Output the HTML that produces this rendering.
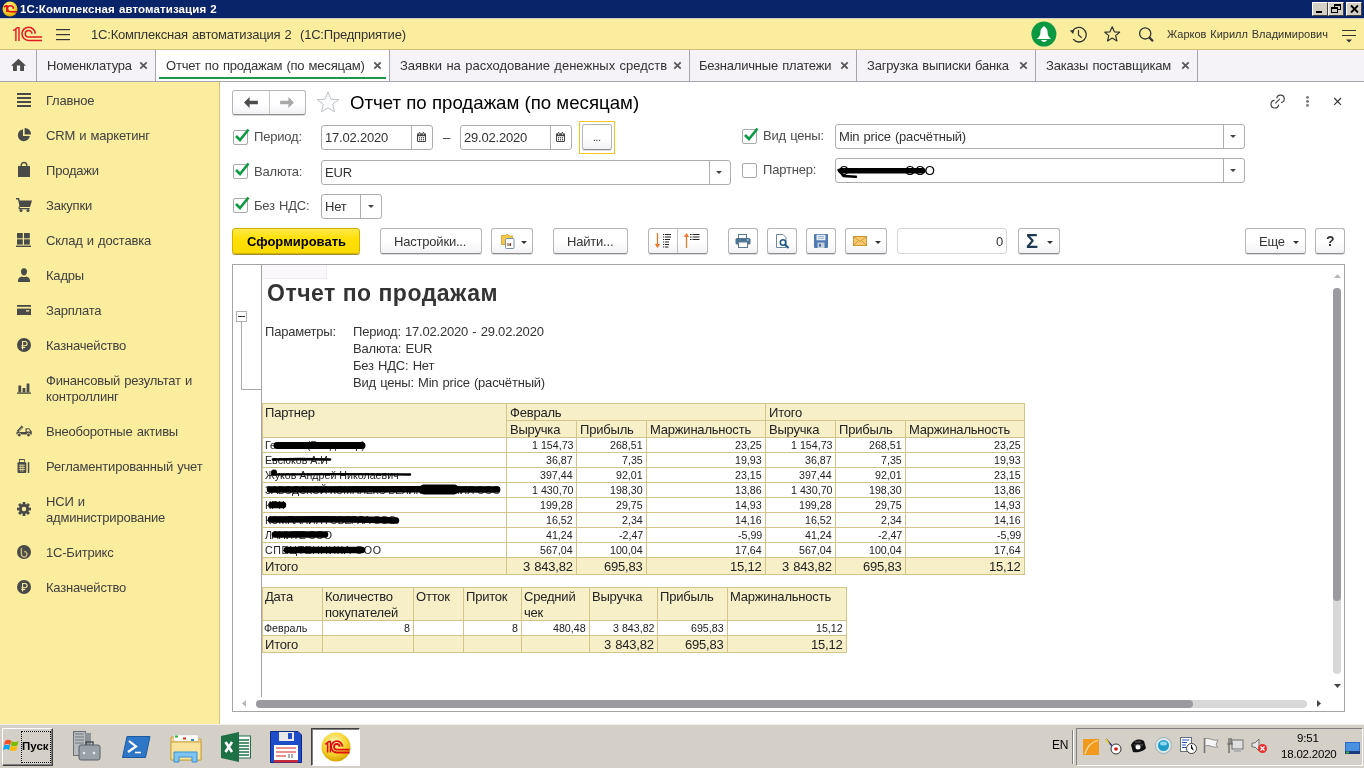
<!DOCTYPE html>
<html><head><meta charset="utf-8">
<style>
*{margin:0;padding:0;box-sizing:border-box}
html,body{width:1364px;height:768px;overflow:hidden;background:#fff;font-family:"Liberation Sans",sans-serif;font-size:13px;color:#333}
.a{position:absolute}
.t,.si,.lbl,.c{will-change:transform}
svg{position:absolute;overflow:visible}
.t{position:absolute;white-space:nowrap;line-height:1;letter-spacing:-0.2px;word-spacing:0.8px}
#title{left:0;top:0;width:1364px;height:18px;background:#0A246A}
#hdr{left:0;top:18px;width:1364px;height:32px;background:#FBED9E;border-top:1px solid #D4D0C8;border-bottom:1px solid #D2C07A}
#tabs{left:0;top:50px;width:1364px;height:32px;background:#F5F3F7;border-bottom:1px solid #A6A5AD}
.tab{position:absolute;top:0;height:31px;border-right:1px solid #A6A5AD}
.tab .t{top:9px;color:#333}
#side{left:0;top:82px;width:220px;height:642px;background:#FBED9E;border-right:1px solid #D6C47E}
.si{position:absolute;left:46px;color:#404040;white-space:nowrap;line-height:16px;letter-spacing:-0.2px;word-spacing:0.8px;margin-top:1px}
.inp{position:absolute;border:1px solid #ADADAD;border-radius:3px;background:#fff}
.inp .t{top:5px;left:3px;color:#333}
.dd{position:absolute;top:0;bottom:0;border-left:1px solid #ADADAD}
.btn{position:absolute;height:26px;border:1px solid #B6B6B6;border-bottom-color:#8E8E8E;border-radius:3px;background:linear-gradient(#fff,#fff 55%,#F2F0F4);box-shadow:0 1px 0 rgba(0,0,0,0.15)}
.btn .t{top:6px;color:#333}
.cb{position:absolute;width:15px;height:15px;border:1px solid #A9A9A9;border-radius:2px;background:#fff}
.lbl{position:absolute;color:#4D4D4D;white-space:nowrap;line-height:1;letter-spacing:-0.2px;word-spacing:0.8px}
.hl{position:absolute;height:1px;background:#D3C48A}
.vl{position:absolute;width:1px;background:#D3C48A}
.hb{position:absolute;background:#F7EFC8}
.c{position:absolute;white-space:nowrap;line-height:1;color:#222;letter-spacing:-0.2px;word-spacing:0.8px}
.c.s{letter-spacing:0;word-spacing:0}
.s{font-size:10.67px}
.rt{text-align:right}
#task{left:0;top:724px;width:1364px;height:44px;background:#D4D0C8;border-top:1px solid #F0EFEA}
</style></head><body>
<!-- title bar -->
<div id="title" class="a">
  <svg style="left:2px;top:1px" width="16" height="16" viewBox="0 0 16 16">
    <defs><radialGradient id="g1c" cx="45%" cy="35%" r="65%"><stop offset="0" stop-color="#FFF8C8"/><stop offset=".6" stop-color="#F8D530"/><stop offset="1" stop-color="#D8A400"/></radialGradient></defs>
    <circle cx="8" cy="8" r="7.5" fill="url(#g1c)"/>
    <path d="M2 6.2 L4 4.8 H5 V11" stroke="#E01010" stroke-width="1.6" fill="none"/>
    <path d="M11.4 7.8 A3 3 0 1 0 8.4 10.8 H15" stroke="#E01010" stroke-width="1.6" fill="none"/>
  </svg>
  <div class="t" style="left:20px;top:4px;font-size:11.5px;font-weight:bold;color:#fff;letter-spacing:0.1px">1С:Комплексная автоматизация 2</div>
  <!-- window buttons -->
  <div class="a" style="left:1312px;top:2px;width:16px;height:14px;background:#D4D0C8;border:1px solid;border-color:#fff #404040 #404040 #fff"><div class="a" style="left:3px;top:8px;width:6px;height:2px;background:#000"></div></div>
  <div class="a" style="left:1328px;top:2px;width:16px;height:14px;background:#D4D0C8;border:1px solid;border-color:#fff #404040 #404040 #fff">
    <div class="a" style="left:5px;top:1px;width:7px;height:6px;border:1px solid #000;border-top-width:2px"></div>
    <div class="a" style="left:2px;top:4px;width:7px;height:6px;border:1px solid #000;border-top-width:2px;background:#D4D0C8"></div></div>
  <div class="a" style="left:1346px;top:2px;width:16px;height:14px;background:#D4D0C8;border:1px solid;border-color:#fff #404040 #404040 #fff">
    <svg style="left:3px;top:2px" width="9" height="8" viewBox="0 0 9 8"><path d="M1 0.5 L8 7.5 M8 0.5 L1 7.5" stroke="#000" stroke-width="1.8"/></svg></div>
</div>

<!-- header -->
<div id="hdr" class="a">
  <svg style="left:0;top:-19px" width="80" height="50" viewBox="0 0 80 50">
    <path d="M13.3 30.8 L17.3 27.6 H19 V41 M15.9 29 V41" stroke="#E21A22" stroke-width="1.4" fill="none"/>
    <path d="M35.2 33.8 A6.6 6.6 0 1 0 28.6 40.4 H42" stroke="#E21A22" stroke-width="1.5" fill="none"/>
    <path d="M31.9 33.8 A3.3 3.3 0 1 0 28.6 37.1 H42" stroke="#E21A22" stroke-width="1.5" fill="none"/>
    <rect x="56" y="29" width="14" height="1.2" fill="#333"/><rect x="56" y="34" width="14" height="1.2" fill="#333"/><rect x="56" y="39" width="14" height="1.2" fill="#333"/>
  </svg>
  <div class="t" style="left:91px;top:9px;color:#333">1С:Комплексная автоматизация 2&nbsp; (1С:Предприятие)</div>
  <svg style="left:0;top:-19px" width="1364" height="50" viewBox="0 0 1364 50">
    <circle cx="1043.9" cy="34.1" r="12.5" fill="#0C9942"/>
    <path d="M1044 26.6 C1043 26.6 1042.4 27.3 1042.2 28 C1041 28.6 1040.5 30 1040.4 32.5 C1040.3 35.2 1039.6 37 1036.8 39 H1051.2 C1048.4 37 1047.7 35.2 1047.6 32.5 C1047.5 30 1047 28.6 1045.8 28 C1045.6 27.3 1045 26.6 1044 26.6 Z" fill="#fff"/>
    <path d="M1041 40.1 H1047 C1046.5 41.3 1045.5 41.9 1044 41.9 C1042.5 41.9 1041.5 41.3 1041 40.1 Z" fill="#fff"/>
    <path d="M1072.4 31.5 A7.3 7.3 0 1 1 1073.2 39.2" stroke="#333" stroke-width="1.3" fill="none"/>
    <path d="M1069.8 30.6 L1074.2 30 L1073.2 34 Z" fill="#333"/>
    <path d="M1078.5 30 V35 L1081.7 37.8" stroke="#333" stroke-width="1.2" fill="none"/>
    <path d="M1112.2 26.8 L1114.4 31.8 L1119.6 32.2 L1115.6 35.6 L1116.9 40.9 L1112.2 38 L1107.5 40.9 L1108.8 35.6 L1104.8 32.2 L1110 31.8 Z" stroke="#333" stroke-width="1.2" fill="none" stroke-linejoin="round"/>
    <circle cx="1145.2" cy="33.4" r="5.6" stroke="#333" stroke-width="1.3" fill="none"/>
    <path d="M1149.2 37.4 L1153 41.2" stroke="#333" stroke-width="2.2"/>
  </svg>
  <div class="t" style="left:1167px;top:10px;font-size:11px;color:#333;letter-spacing:0">Жарков Кирилл Владимирович</div>
  <svg style="left:1342px;top:10px" width="15" height="14" viewBox="0 0 15 14"><path d="M0 1.5h14M0 6.5h14" stroke="#333" stroke-width="1.2"/><path d="M4 10.5 h6 l-3 3z" fill="#333"/></svg>
</div>

<!-- tabs -->
<div id="tabs" class="a">
  <div class="tab" style="left:0;width:37px">
    <svg style="left:11px;top:8px" width="15" height="14" viewBox="0 0 15 14"><path d="M7.5 0.7 L15 7.7 H13 V13 H9.1 V7.4 H5.9 V13 H2 V7.7 H0 Z" fill="#4D4D4D"/></svg>
  </div>
  <div class="tab" style="left:37px;width:119px"><div class="t" style="left:10px">Номенклатура</div>
    <svg style="left:102px;top:11px" width="9" height="9" viewBox="0 0 9 9"><path d="M1.3 1.3L7.7 7.7M7.7 1.3L1.3 7.7" stroke="#555" stroke-width="1.7"/></svg></div>
  <div class="tab" style="left:156px;width:234px;background:#fff"><div class="t" style="left:10px">Отчет по продажам (по месяцам)</div>
    <svg style="left:217px;top:11px" width="9" height="9" viewBox="0 0 9 9"><path d="M1.3 1.3L7.7 7.7M7.7 1.3L1.3 7.7" stroke="#555" stroke-width="1.7"/></svg>
    <div class="a" style="left:3px;top:27px;width:227px;height:2px;background:#1A9A48"></div></div>
  <div class="tab" style="left:390px;width:300px"><div class="t" style="left:10px;letter-spacing:0">Заявки на расходование денежных средств</div>
    <svg style="left:283px;top:11px" width="9" height="9" viewBox="0 0 9 9"><path d="M1.3 1.3L7.7 7.7M7.7 1.3L1.3 7.7" stroke="#555" stroke-width="1.7"/></svg></div>
  <div class="tab" style="left:690px;width:167px"><div class="t" style="left:9px">Безналичные платежи</div>
    <svg style="left:150px;top:11px" width="9" height="9" viewBox="0 0 9 9"><path d="M1.3 1.3L7.7 7.7M7.7 1.3L1.3 7.7" stroke="#555" stroke-width="1.7"/></svg></div>
  <div class="tab" style="left:857px;width:179px"><div class="t" style="left:10px">Загрузка выписки банка</div>
    <svg style="left:162px;top:11px" width="9" height="9" viewBox="0 0 9 9"><path d="M1.3 1.3L7.7 7.7M7.7 1.3L1.3 7.7" stroke="#555" stroke-width="1.7"/></svg></div>
  <div class="tab" style="left:1036px;width:162px"><div class="t" style="left:10px">Заказы поставщикам</div>
    <svg style="left:145px;top:11px" width="9" height="9" viewBox="0 0 9 9"><path d="M1.3 1.3L7.7 7.7M7.7 1.3L1.3 7.7" stroke="#555" stroke-width="1.7"/></svg></div>
</div>
<!-- sidebar -->
<div id="side" class="a">
  <div class="si" style="top:10px">Главное</div>
  <div class="si" style="top:45px">CRM и маркетинг</div>
  <div class="si" style="top:80px">Продажи</div>
  <div class="si" style="top:115px">Закупки</div>
  <div class="si" style="top:150px">Склад и доставка</div>
  <div class="si" style="top:185px">Кадры</div>
  <div class="si" style="top:220px">Зарплата</div>
  <div class="si" style="top:255px">Казначейство</div>
  <div class="si" style="top:290px">Финансовый результат и<br>контроллинг</div>
  <div class="si" style="top:341px">Внеоборотные активы</div>
  <div class="si" style="top:376px">Регламентированный учет</div>
  <div class="si" style="top:411px">НСИ и<br>администрирование</div>
  <div class="si" style="top:462px">1С-Битрикс</div>
  <div class="si" style="top:497px">Казначейство</div>
</div>
<!-- sidebar icons (page coords) -->
<svg style="left:17px;top:93px" width="14" height="14" viewBox="0 0 14 14"><path d="M0 1h14M0 5h14M0 9h14M0 13h14" stroke="#4A4A48" stroke-width="2"/></svg>
<svg style="left:17px;top:128px" width="14" height="14" viewBox="0 0 14 14"><path d="M6 1.2 A6 6 0 1 0 12.8 8 H6 Z" fill="#4A4A48"/><path d="M7.6 0 A6.2 6.2 0 0 1 14 6.4 H7.6 Z" fill="#4A4A48"/></svg>
<svg style="left:18px;top:162px" width="12" height="15" viewBox="0 0 12 15"><rect x="0" y="4" width="12" height="11" fill="#4A4A48"/><path d="M3.2 6 V3.3 A2.8 2.8 0 0 1 8.8 3.3 V6" stroke="#4A4A48" stroke-width="1.4" fill="none"/></svg>
<svg style="left:16px;top:198px" width="16" height="14" viewBox="0 0 16 14"><path d="M0 0.8 H2.6 L3 3" stroke="#4A4A48" stroke-width="1.4" fill="none"/><path d="M2.4 2.4 H16 L14 9 H3.5 Z" fill="#4A4A48"/><path d="M3.2 8.5 V10.6 H13.6" stroke="#4A4A48" stroke-width="1.2" fill="none"/><circle cx="5" cy="12.4" r="1.5" fill="#4A4A48"/><circle cx="12" cy="12.4" r="1.5" fill="#4A4A48"/></svg>
<svg style="left:16px;top:233px" width="15" height="14" viewBox="0 0 15 14"><rect x="1" y="0" width="5.8" height="5.3" fill="#4A4A48"/><rect x="8" y="0" width="5.8" height="5.3" fill="#4A4A48"/><rect x="1" y="6.3" width="5.8" height="5.3" fill="#4A4A48"/><rect x="8" y="6.3" width="5.8" height="5.3" fill="#4A4A48"/><rect x="0" y="12.6" width="15" height="1.4" fill="#4A4A48"/></svg>
<svg style="left:18px;top:268px" width="12" height="14" viewBox="0 0 12 14"><path d="M6 0.3 C8.4 0.3 9 2 9 3.8 C9 6.2 7.6 7.6 6 7.6 C4.4 7.6 3 6.2 3 3.8 C3 2 3.6 0.3 6 0.3Z" fill="#4A4A48"/><path d="M0 12.6 C0 10 2 8.8 3.8 8.4 C4.6 9.2 7.4 9.2 8.2 8.4 C10 8.8 12 10 12 12.6 V14 H0Z" fill="#4A4A48"/></svg>
<svg style="left:17px;top:305px" width="14" height="10" viewBox="0 0 14 10"><rect x="0" y="0" width="14" height="1.8" fill="#4A4A48"/><rect x="0" y="3.6" width="14" height="6.4" fill="#4A4A48"/><rect x="9" y="5.2" width="3.2" height="1.3" fill="#FBED9E"/></svg>
<svg style="left:17px;top:338px" width="14" height="14" viewBox="0 0 14 14"><circle cx="7" cy="7" r="7" fill="#4A4A48"/><path d="M5.6 11.5 V3.5 H8 A2.1 2.1 0 0 1 8 7.7 H4.4 M4.4 9.5 H8.2" stroke="#FBED9E" stroke-width="1.1" fill="none"/></svg>
<svg style="left:17px;top:382px" width="14" height="12" viewBox="0 0 14 12"><rect x="1.4" y="3.5" width="2.8" height="7" fill="#4A4A48"/><rect x="5.6" y="6" width="2.8" height="4.5" fill="#4A4A48"/><rect x="9.6" y="1.5" width="2.8" height="9" fill="#4A4A48"/><rect x="0" y="10.5" width="14" height="1.3" fill="#4A4A48"/></svg>
<svg style="left:16px;top:424px" width="16" height="13" viewBox="0 0 16 13"><path d="M0.5 7.2 L5.5 1.5 L7.5 3.2 L3 8" fill="#4A4A48"/><path d="M1.5 5.5 L4.5 2.2 M3 7 L6.3 3.2" stroke="#FBED9E" stroke-width="0.7"/><path d="M0.5 8 H9.5 V4.2 H13.2 L15.8 7.5 V10.5 H0.5 Z" fill="#4A4A48"/><path d="M10.7 5.2 H12.8 L14.4 7.4 H10.7Z" fill="#FBED9E"/><circle cx="3.3" cy="11" r="1.8" fill="#4A4A48" stroke="#FBED9E" stroke-width="0.7"/><circle cx="12.5" cy="11" r="1.8" fill="#4A4A48" stroke="#FBED9E" stroke-width="0.7"/></svg>
<svg style="left:17px;top:459px" width="13" height="14" viewBox="0 0 13 14"><rect x="0.5" y="3.2" width="8.8" height="10.8" rx="1" fill="#4A4A48"/><rect x="2" y="0" width="5.8" height="3.8" fill="#4A4A48"/><rect x="2.8" y="1" width="4.2" height="2" fill="#FBED9E"/><path d="M1.8 6.2h6.2M1.8 8.4h6.2M1.8 10.6h6.2M3.8 5.5v7.2M5.9 5.5v7.2" stroke="#FBED9E" stroke-width="0.7"/><rect x="10.8" y="3.2" width="1.5" height="10.8" fill="#4A4A48"/></svg>
<svg style="left:17px;top:502px" width="14" height="14" viewBox="0 0 14 14"><g fill="#4A4A48"><circle cx="7" cy="7" r="5"/><rect x="5.6" y="0" width="2.8" height="14"/><rect x="0" y="5.6" width="14" height="2.8"/><rect x="5.6" y="0" width="2.8" height="14" transform="rotate(45 7 7)"/><rect x="5.6" y="0" width="2.8" height="14" transform="rotate(-45 7 7)"/></g><circle cx="7" cy="7" r="2.2" fill="#FBED9E"/></svg>
<svg style="left:17px;top:545px" width="14" height="14" viewBox="0 0 14 14"><circle cx="7" cy="7" r="7" fill="#4A4A48"/><path d="M4.4 3 V9 A2.8 2.8 0 1 0 7.2 6.4" stroke="#C9B978" stroke-width="1.5" fill="none"/></svg>
<svg style="left:17px;top:580px" width="14" height="14" viewBox="0 0 14 14"><circle cx="7" cy="7" r="7" fill="#4A4A48"/><path d="M5.6 11.5 V3.5 H8 A2.1 2.1 0 0 1 8 7.7 H4.4 M4.4 9.5 H8.2" stroke="#FBED9E" stroke-width="1.1" fill="none"/></svg>
<!-- form header -->
<div class="btn" style="left:232px;top:90px;width:74px;height:25px"><div class="a" style="left:36px;top:0;width:1px;height:23px;background:#C8C8C8"></div></div>
<svg style="left:244px;top:97px" width="14" height="11" viewBox="0 0 14 11"><path d="M0 5.5 L5.6 0 V3.8 H13.9 V7.2 H5.6 V11Z" fill="#4D4D4D"/></svg>
<svg style="left:280px;top:97px" width="14" height="11" viewBox="0 0 14 11"><path d="M14 5.5 L8.4 0 V3.8 H0.1 V7.2 H8.4 V11Z" fill="#A8A8A8"/></svg>
<svg style="left:316px;top:91px" width="24" height="22" viewBox="0 0 24 22"><path d="M12 1 L14.9 8.2 L22.6 8.6 L16.6 13.4 L18.6 20.9 L12 16.7 L5.4 20.9 L7.4 13.4 L1.4 8.6 L9.1 8.2 Z" stroke="#B8C2CC" stroke-width="1" fill="none" stroke-linejoin="round"/></svg>
<div class="t" style="left:350px;top:94px;font-size:18.67px;color:#000;letter-spacing:0;word-spacing:0">Отчет по продажам (по месяцам)</div>
<svg style="left:0;top:0" width="1364" height="120" viewBox="0 0 1364 120">
  <path d="M1274.6 100.4 A3.8 3.8 0 1 0 1278.6 104.6 M1276.7 98.4 A3.8 3.8 0 1 1 1281 102.6 M1275.3 103.4 L1279.8 98.9" stroke="#444" stroke-width="1.2" fill="none"/>
  <circle cx="1307.5" cy="97.4" r="1.4" fill="#777"/><circle cx="1307.5" cy="101.5" r="1.4" fill="#777"/><circle cx="1307.5" cy="105.4" r="1.4" fill="#777"/>
  <path d="M1334.2 98 L1341 104.9 M1341 98 L1334.2 104.9" stroke="#333" stroke-width="1.1"/>
</svg>

<!-- row 1 -->
<div class="cb" style="left:233px;top:130px"></div>
<svg style="left:235px;top:128px" width="15" height="14" viewBox="0 0 15 14"><path d="M1 8 L5 12 L13.5 1.5" stroke="#0E9A44" stroke-width="2.6" fill="none"/></svg>
<div class="lbl" style="left:254px;top:130px">Период:</div>
<div class="inp" style="left:321px;top:125px;width:112px;height:25px"><div class="t">17.02.2020</div><div class="dd" style="left:89px;width:22px"></div>
  <svg style="left:95px;top:6px" width="10" height="11" viewBox="0 0 10 11"><rect x="0" y="1.2" width="9" height="8.8" rx="1.2" fill="#444"/><rect x="1" y="4.2" width="7" height="4.8" fill="#fff"/><rect x="2" y="1.3" width="1.3" height="1.3" fill="#fff"/><rect x="5.8" y="1.3" width="1.3" height="1.3" fill="#fff"/><circle cx="2.6" cy="0.7" r="0.75" fill="#444"/><circle cx="6.4" cy="0.7" r="0.75" fill="#444"/><g fill="#444"><circle cx="2.5" cy="5.7" r="0.7"/><circle cx="4.5" cy="5.7" r="0.7"/><circle cx="6.5" cy="5.7" r="0.7"/><circle cx="2.5" cy="7.7" r="0.7"/><circle cx="4.5" cy="7.7" r="0.7"/><circle cx="6.5" cy="7.7" r="0.7"/></g></svg></div>
<div class="t" style="left:443px;top:131px;color:#333">–</div>
<div class="inp" style="left:460px;top:125px;width:112px;height:25px"><div class="t">29.02.2020</div><div class="dd" style="left:89px;width:22px"></div>
  <svg style="left:95px;top:6px" width="10" height="11" viewBox="0 0 10 11"><rect x="0" y="1.2" width="9" height="8.8" rx="1.2" fill="#444"/><rect x="1" y="4.2" width="7" height="4.8" fill="#fff"/><rect x="2" y="1.3" width="1.3" height="1.3" fill="#fff"/><rect x="5.8" y="1.3" width="1.3" height="1.3" fill="#fff"/><circle cx="2.6" cy="0.7" r="0.75" fill="#444"/><circle cx="6.4" cy="0.7" r="0.75" fill="#444"/><g fill="#444"><circle cx="2.5" cy="5.7" r="0.7"/><circle cx="4.5" cy="5.7" r="0.7"/><circle cx="6.5" cy="5.7" r="0.7"/><circle cx="2.5" cy="7.7" r="0.7"/><circle cx="4.5" cy="7.7" r="0.7"/><circle cx="6.5" cy="7.7" r="0.7"/></g></svg></div>
<div class="a" style="left:579px;top:121px;width:36px;height:33px;border:1px solid #F2C71E"></div>
<div class="btn" style="left:582px;top:124px;width:30px;height:26px"><div class="t" style="left:10px;top:8px;font-size:10px">...</div></div>

<div class="cb" style="left:742px;top:129px"></div>
<svg style="left:744px;top:127px" width="15" height="14" viewBox="0 0 15 14"><path d="M1 8 L5 12 L13.5 1.5" stroke="#0E9A44" stroke-width="2.6" fill="none"/></svg>
<div class="lbl" style="left:763px;top:129px">Вид цены:</div>
<div class="inp" style="left:835px;top:124px;width:410px;height:25px"><div class="t">Min price (расчётный)</div><div class="dd" style="left:387px;width:22px"></div>
  <svg style="left:394px;top:10px" width="6" height="3" viewBox="0 0 6 3"><path d="M0 0h6L3 3z" fill="#444"/></svg></div>

<!-- row 2 -->
<div class="cb" style="left:233px;top:164px"></div>
<svg style="left:235px;top:162px" width="15" height="14" viewBox="0 0 15 14"><path d="M1 8 L5 12 L13.5 1.5" stroke="#0E9A44" stroke-width="2.6" fill="none"/></svg>
<div class="lbl" style="left:254px;top:165px">Валюта:</div>
<div class="inp" style="left:321px;top:160px;width:410px;height:25px"><div class="t">EUR</div><div class="dd" style="left:387px;width:22px"></div>
  <svg style="left:394px;top:10px" width="6" height="3" viewBox="0 0 6 3"><path d="M0 0h6L3 3z" fill="#444"/></svg></div>

<div class="cb" style="left:742px;top:163px"></div>
<div class="lbl" style="left:763px;top:163px">Партнер:</div>
<div class="inp" style="left:835px;top:158px;width:410px;height:25px"><div class="dd" style="left:387px;width:22px"></div>
  <svg style="left:394px;top:10px" width="6" height="3" viewBox="0 0 6 3"><path d="M0 0h6L3 3z" fill="#444"/></svg></div>
<div class="t" style="left:839px;top:164px;color:#000">С</div>
<div class="t" style="left:905px;top:164px;color:#000">ООО</div>
<svg style="left:832px;top:156px" width="110" height="30" viewBox="0 0 110 30"><g stroke="#000" fill="none" stroke-linecap="round"><path d="M9 14.8 H91" stroke-width="5.5"/><path d="M6.5 14 L11.5 20 L24 20.8" stroke-width="2.4"/></g></svg>
<!-- row 3 -->
<div class="cb" style="left:233px;top:198px"></div>
<svg style="left:235px;top:196px" width="15" height="14" viewBox="0 0 15 14"><path d="M1 8 L5 12 L13.5 1.5" stroke="#0E9A44" stroke-width="2.6" fill="none"/></svg>
<div class="lbl" style="left:254px;top:199px">Без НДС:</div>
<div class="inp" style="left:321px;top:194px;width:61px;height:25px"><div class="t">Нет</div><div class="dd" style="left:38px;width:22px"></div>
  <svg style="left:46px;top:10px" width="6" height="3" viewBox="0 0 6 3"><path d="M0 0h6L3 3z" fill="#444"/></svg></div>
<div class="a" style="left:710px;top:161px;width:1px;height:23px"></div>

<!-- toolbar -->
<div class="btn" style="left:232px;top:228px;width:128px;background:linear-gradient(#FFE84A,#FFE000 45%,#F9D900);border-color:#D0B000;box-shadow:0 1px 0 #A89030"><div class="t" style="left:14px;font-weight:bold;color:#000;letter-spacing:0">Сформировать</div></div>
<div class="btn" style="left:380px;top:228px;width:102px"><div class="t" style="left:13px">Настройки...</div></div>
<div class="btn" style="left:491px;top:228px;width:42px"></div>
<svg style="left:501px;top:233px" width="14" height="16" viewBox="0 0 14 16"><path d="M0.5 2.5 H4.5 L5.5 1.5 H7 L8 3 H11.5 V11.5 H0.5Z" fill="#F4C94A" stroke="#D49A20" stroke-width="0.8"/><rect x="4.5" y="5.5" width="8.5" height="10" rx="1" fill="#fff" stroke="#7890A0" stroke-width="1"/><path d="M7 13V10M9.5 13V10" stroke="#E02020" stroke-width="1"/><path d="M8.3 13V10.5" stroke="#20B040" stroke-width="1"/></svg>
<svg style="left:521px;top:241px" width="6" height="3" viewBox="0 0 6 3"><path d="M0 0h6L3 3z" fill="#333"/></svg>
<div class="btn" style="left:553px;top:228px;width:75px"><div class="t" style="left:13px">Найти...</div></div>
<div class="btn" style="left:648px;top:228px;width:60px"><div class="a" style="left:28px;top:0;width:1px;height:24px;background:#C0C0C0"></div></div>
<svg style="left:654px;top:233px" width="18" height="16" viewBox="0 0 18 16"><path d="M3.5 0 V14" stroke="#F07828" stroke-width="1.3"/><path d="M0.8 11 L3.5 15 L6.2 11Z" fill="#F07828"/><path d="M9 1.5h1.2M11 1.5h6M9 4h1.2M11 4h6M9 6.5h1.2M11 6.5h5M9 9h1.2M11 9h4M9 11.5h1.2M11 11.5h4M9 14h1.2M11 14h3.5" stroke="#222" stroke-width="1"/></svg>
<svg style="left:683px;top:233px" width="18" height="16" viewBox="0 0 18 16"><path d="M3.5 1.5 V15" stroke="#F07828" stroke-width="1.3"/><path d="M0.8 4 L3.5 0 L6.2 4Z" fill="#F07828"/><path d="M7 1.5h1.5M9.5 1.5h7M7 4h1.5M9.5 4h7M7 6.5h1.5M9.5 6.5h7" stroke="#222" stroke-width="1.1"/></svg>
<div class="btn" style="left:728px;top:228px;width:30px"></div>
<svg style="left:735px;top:234px" width="16" height="14" viewBox="0 0 16 14"><rect x="3.5" y="0.5" width="8" height="4" fill="#fff" stroke="#5A7890"/><rect x="0.5" y="4" width="15" height="6.5" rx="1.5" fill="#4E7494"/><rect x="3.5" y="8" width="9" height="5.5" fill="#fff" stroke="#5A7890"/><rect x="12" y="5.5" width="1.5" height="1" fill="#fff"/></svg>
<div class="btn" style="left:767px;top:228px;width:30px"></div>
<svg style="left:776px;top:234px" width="14" height="15" viewBox="0 0 14 15"><path d="M0.5 0.5 H7 L10 3.5 V13.5 H0.5Z" fill="#fff" stroke="#6E8AA0"/><circle cx="7" cy="8.5" r="2.7" fill="#fff" stroke="#1E5A8E" stroke-width="1.6"/><path d="M9 10.5 L12.5 14" stroke="#1E5A8E" stroke-width="2"/></svg>
<div class="btn" style="left:806px;top:228px;width:30px"></div>
<svg style="left:814px;top:234px" width="14" height="14" viewBox="0 0 14 14"><rect x="0" y="0" width="14" height="14" rx="1" fill="#4D7AB0"/><rect x="2.5" y="0.8" width="9" height="5.5" fill="#E8EEF4"/><path d="M4 2.5h6M4 4.3h6" stroke="#8AA4C0" stroke-width="0.8"/><rect x="3.5" y="8.5" width="7" height="5.5" fill="#C8D0D8"/><rect x="5" y="9.8" width="2" height="3" fill="#4D7AB0"/></svg>
<div class="btn" style="left:845px;top:228px;width:42px"></div>
<svg style="left:853px;top:236px" width="14" height="10" viewBox="0 0 14 10"><rect x="0.5" y="0.5" width="13" height="9" fill="#F7C870" stroke="#C8962E"/><path d="M0.5 0.5 L7 5.5 L13.5 0.5 M0.5 9.5 L5 5 M13.5 9.5 L9 5" stroke="#C8962E" stroke-width="0.9" fill="none"/></svg>
<svg style="left:875px;top:241px" width="6" height="3" viewBox="0 0 6 3"><path d="M0 0h6L3 3z" fill="#333"/></svg>
<div class="inp" style="left:897px;top:228px;width:110px;height:26px;border-color:#D6D6D6"><div class="t" style="left:auto;right:3px;top:6px">0</div></div>
<div class="btn" style="left:1018px;top:228px;width:42px"></div>
<div class="t" style="left:1026px;top:231px;font-size:20px;font-weight:bold;color:#1E3A52;letter-spacing:0">Σ</div>
<svg style="left:1047px;top:241px" width="6" height="3" viewBox="0 0 6 3"><path d="M0 0h6L3 3z" fill="#333"/></svg>
<div class="btn" style="left:1245px;top:228px;width:61px"><div class="t" style="left:13px">Еще</div>
  <svg style="left:47px;top:12px" width="6" height="3" viewBox="0 0 6 3"><path d="M0 0h6L3 3z" fill="#333"/></svg></div>
<div class="btn" style="left:1315px;top:228px;width:30px"><div class="t" style="left:10px;font-weight:bold;font-size:14px;top:5px">?</div></div>
<!-- report area -->
<div class="a" style="left:232px;top:264px;width:1113px;height:448px;border:1px solid #A4A4A4"></div>
<div class="a" style="left:261px;top:265px;width:1px;height:432px;background:#A4A4A4"></div>
<div class="a" style="left:262px;top:265px;width:65px;height:14px;background:#FBF8FC;border-right:1px solid #F0ECF2;border-bottom:1px solid #F0ECF2"></div>
<div class="a" style="left:236px;top:311px;width:11px;height:11px;border:1px solid #B0B0B0;background:#fff"><div class="a" style="left:1px;top:4px;width:7px;height:1px;background:#333"></div></div>
<div class="a" style="left:241px;top:322px;width:1px;height:68px;background:#A8A8A8"></div>
<div class="a" style="left:241px;top:389px;width:20px;height:1px;background:#A8A8A8"></div>
<div class="t" style="left:267px;top:282px;font-size:23px;font-weight:bold;letter-spacing:0.5px;word-spacing:0;color:#333">Отчет по продажам</div>
<div class="t" style="left:265px;top:325px;color:#333">Параметры:</div>
<div class="t" style="left:353px;top:323px;line-height:17px;color:#333">Период: 17.02.2020 - 29.02.2020<br>Валюта: EUR<br>Без НДС: Нет<br>Вид цены: Min price (расчётный)</div>
<div class="hb" style="left:262px;top:403px;width:762px;height:34px"></div>
<div class="hb" style="left:262px;top:557px;width:762px;height:17px"></div>
<div class="hl" style="left:262px;top:403px;width:763px"></div>
<div class="hl" style="left:262px;top:437px;width:763px"></div>
<div class="hl" style="left:262px;top:452px;width:763px"></div>
<div class="hl" style="left:262px;top:467px;width:763px"></div>
<div class="hl" style="left:262px;top:482px;width:763px"></div>
<div class="hl" style="left:262px;top:497px;width:763px"></div>
<div class="hl" style="left:262px;top:512px;width:763px"></div>
<div class="hl" style="left:262px;top:527px;width:763px"></div>
<div class="hl" style="left:262px;top:542px;width:763px"></div>
<div class="hl" style="left:262px;top:557px;width:763px"></div>
<div class="hl" style="left:262px;top:574px;width:763px"></div>
<div class="hl" style="left:506px;top:420px;width:519px"></div>
<div class="vl" style="left:262px;top:403px;height:172px"></div>
<div class="vl" style="left:1024px;top:403px;height:172px"></div>
<div class="vl" style="left:506px;top:403px;height:172px"></div>
<div class="vl" style="left:765px;top:403px;height:172px"></div>
<div class="vl" style="left:576px;top:420px;height:155px"></div>
<div class="vl" style="left:646px;top:420px;height:155px"></div>
<div class="vl" style="left:835px;top:420px;height:155px"></div>
<div class="vl" style="left:905px;top:420px;height:155px"></div>
<div class="c " style="left:265px;top:406px;">Партнер</div>
<div class="c " style="left:510px;top:406px;">Февраль</div>
<div class="c " style="left:769px;top:406px;">Итого</div>
<div class="c " style="left:510px;top:423px;">Выручка</div>
<div class="c " style="left:580px;top:423px;">Прибыль</div>
<div class="c " style="left:650px;top:423px;">Маржинальность</div>
<div class="c " style="left:769px;top:423px;">Выручка</div>
<div class="c " style="left:839px;top:423px;">Прибыль</div>
<div class="c " style="left:909px;top:423px;">Маржинальность</div>
<div class="c s" style="left:265px;top:440px;">Ге</div>
<div class="c s" style="right:791px;top:440px;">1 154,73</div>
<div class="c s" style="right:721px;top:440px;">268,51</div>
<div class="c s" style="right:602px;top:440px;">23,25</div>
<div class="c s" style="right:532px;top:440px;">1 154,73</div>
<div class="c s" style="right:462px;top:440px;">268,51</div>
<div class="c s" style="right:343px;top:440px;">23,25</div>
<div class="c s" style="left:265px;top:455px;">Евсюков А.И</div>
<div class="c s" style="right:791px;top:455px;">36,87</div>
<div class="c s" style="right:721px;top:455px;">7,35</div>
<div class="c s" style="right:602px;top:455px;">19,93</div>
<div class="c s" style="right:532px;top:455px;">36,87</div>
<div class="c s" style="right:462px;top:455px;">7,35</div>
<div class="c s" style="right:343px;top:455px;">19,93</div>
<div class="c s" style="left:265px;top:470px;">Жуков Андрей Николаевич</div>
<div class="c s" style="right:791px;top:470px;">397,44</div>
<div class="c s" style="right:721px;top:470px;">92,01</div>
<div class="c s" style="right:602px;top:470px;">23,15</div>
<div class="c s" style="right:532px;top:470px;">397,44</div>
<div class="c s" style="right:462px;top:470px;">92,01</div>
<div class="c s" style="right:343px;top:470px;">23,15</div>
<div class="c s" style="left:265px;top:485px;letter-spacing:-0.36px">ЗАВОДСКОЙ КОМПЛЕКС ВЕЛИКАЯ ЛИНИЯ ООО</div>
<div class="c s" style="right:791px;top:485px;">1 430,70</div>
<div class="c s" style="right:721px;top:485px;">198,30</div>
<div class="c s" style="right:602px;top:485px;">13,86</div>
<div class="c s" style="right:532px;top:485px;">1 430,70</div>
<div class="c s" style="right:462px;top:485px;">198,30</div>
<div class="c s" style="right:343px;top:485px;">13,86</div>
<div class="c s" style="left:265px;top:500px;">КРК</div>
<div class="c s" style="right:791px;top:500px;">199,28</div>
<div class="c s" style="right:721px;top:500px;">29,75</div>
<div class="c s" style="right:602px;top:500px;">14,93</div>
<div class="c s" style="right:532px;top:500px;">199,28</div>
<div class="c s" style="right:462px;top:500px;">29,75</div>
<div class="c s" style="right:343px;top:500px;">14,93</div>
<div class="c s" style="left:265px;top:515px;letter-spacing:-0.45px">КОМПАНИЯ ГОВЕРЛА ООО</div>
<div class="c s" style="right:791px;top:515px;">16,52</div>
<div class="c s" style="right:721px;top:515px;">2,34</div>
<div class="c s" style="right:602px;top:515px;">14,16</div>
<div class="c s" style="right:532px;top:515px;">16,52</div>
<div class="c s" style="right:462px;top:515px;">2,34</div>
<div class="c s" style="right:343px;top:515px;">14,16</div>
<div class="c s" style="left:265px;top:530px;letter-spacing:-0.44px">ЛАНИТЕ ООО</div>
<div class="c s" style="right:791px;top:530px;">41,24</div>
<div class="c s" style="right:721px;top:530px;">-2,47</div>
<div class="c s" style="right:602px;top:530px;">-5,99</div>
<div class="c s" style="right:532px;top:530px;">41,24</div>
<div class="c s" style="right:462px;top:530px;">-2,47</div>
<div class="c s" style="right:343px;top:530px;">-5,99</div>
<div class="c s" style="left:265px;top:545px;letter-spacing:0.6px">СПЕЦТЕХНИКА ООО</div>
<div class="c s" style="right:791px;top:545px;">567,04</div>
<div class="c s" style="right:721px;top:545px;">100,04</div>
<div class="c s" style="right:602px;top:545px;">17,64</div>
<div class="c s" style="right:532px;top:545px;">567,04</div>
<div class="c s" style="right:462px;top:545px;">100,04</div>
<div class="c s" style="right:343px;top:545px;">17,64</div>
<div class="c " style="left:265px;top:560px;">Итого</div>
<div class="c " style="right:791px;top:560px;">3 843,82</div>
<div class="c " style="right:721px;top:560px;">695,83</div>
<div class="c " style="right:602px;top:560px;">15,12</div>
<div class="c " style="right:532px;top:560px;">3 843,82</div>
<div class="c " style="right:462px;top:560px;">695,83</div>
<div class="c " style="right:343px;top:560px;">15,12</div>
<div class="hb" style="left:262px;top:587px;width:584px;height:33px"></div>
<div class="hb" style="left:262px;top:635px;width:584px;height:17px"></div>
<div class="hl" style="left:262px;top:587px;width:585px"></div>
<div class="hl" style="left:262px;top:620px;width:585px"></div>
<div class="hl" style="left:262px;top:635px;width:585px"></div>
<div class="hl" style="left:262px;top:652px;width:585px"></div>
<div class="vl" style="left:262px;top:587px;height:66px"></div>
<div class="vl" style="left:322px;top:587px;height:66px"></div>
<div class="vl" style="left:413px;top:587px;height:66px"></div>
<div class="vl" style="left:463px;top:587px;height:66px"></div>
<div class="vl" style="left:521px;top:587px;height:66px"></div>
<div class="vl" style="left:589px;top:587px;height:66px"></div>
<div class="vl" style="left:657px;top:587px;height:66px"></div>
<div class="vl" style="left:727px;top:587px;height:66px"></div>
<div class="vl" style="left:846px;top:587px;height:66px"></div>
<div class="c" style="left:265px;top:589px;line-height:16px">Дата</div>
<div class="c" style="left:325px;top:589px;line-height:16px">Количество<br>покупателей</div>
<div class="c" style="left:416px;top:589px;line-height:16px">Отток</div>
<div class="c" style="left:466px;top:589px;line-height:16px">Приток</div>
<div class="c" style="left:524px;top:589px;line-height:16px">Средний<br>чек</div>
<div class="c" style="left:592px;top:589px;line-height:16px">Выручка</div>
<div class="c" style="left:660px;top:589px;line-height:16px">Прибыль</div>
<div class="c" style="left:730px;top:589px;line-height:16px">Маржинальность</div>
<div class="c s" style="left:264px;top:623px;">Февраль</div>
<div class="c s" style="right:954px;top:623px;">8</div>
<div class="c s" style="right:846px;top:623px;">8</div>
<div class="c s" style="right:778px;top:623px;">480,48</div>
<div class="c s" style="right:710px;top:623px;">3 843,82</div>
<div class="c s" style="right:640px;top:623px;">695,83</div>
<div class="c s" style="right:521px;top:623px;">15,12</div>
<div class="c " style="left:265px;top:638px;">Итого</div>
<div class="c " style="right:710px;top:638px;">3 843,82</div>
<div class="c " style="right:640px;top:638px;">695,83</div>
<div class="c " style="right:521px;top:638px;">15,12</div>
<svg style="left:1334px;top:274px" width="7" height="4" viewBox="0 0 7 4"><path d="M0 4h7L3.5 0z" fill="#B8B8B8"/></svg>
<div class="a" style="left:1333px;top:288px;width:8px;height:386px;border-radius:4px;background:#D8D8D8"></div>
<div class="a" style="left:1333px;top:288px;width:8px;height:313px;border-radius:4px;background:#9B9A9E"></div>
<svg style="left:1334px;top:684px" width="7" height="4" viewBox="0 0 7 4"><path d="M0 0h7L3.5 4z" fill="#444"/></svg>
<svg style="left:242px;top:700px" width="4" height="7" viewBox="0 0 4 7"><path d="M4 0v7L0 3.5z" fill="#B8B8B8"/></svg>
<div class="a" style="left:256px;top:700px;width:1051px;height:8px;border-radius:4px;background:#D8D8D8"></div>
<div class="a" style="left:256px;top:700px;width:937px;height:8px;border-radius:4px;background:#9B9A9E"></div>
<svg style="left:1317px;top:700px" width="4" height="7" viewBox="0 0 4 7"><path d="M0 0v7L4 3.5z" fill="#444"/></svg>
<!-- scribbles -->
<div class="c s" style="left:307px;top:440px">(Владимир)</div>
<svg style="left:0;top:0" width="1364" height="768" viewBox="0 0 1364 768">
<g stroke="#000" fill="none" stroke-linecap="round">
 <path d="M277 445.5 H362" stroke-width="7"/>
 <path d="M273 459.5 C290 459 310 459 330 459.5" stroke-width="2.6"/>
 <path d="M272 474.5 C310 474 360 474 410 474.5" stroke-width="2.4"/>
 <circle cx="274" cy="472.5" r="3" fill="#000" stroke="none"/>
 <path d="M270 489.5 C330 489 420 489 497 489.5" stroke-width="6.5"/>
 <path d="M424 489.5 H454" stroke-width="10"/>
 <path d="M272 505 H283" stroke-width="6.5"/>
 <path d="M271 519.5 C320 519 360 519 396 520.5" stroke-width="6.5"/>
 <path d="M275 534.5 H325" stroke-width="6.5"/>
 <path d="M287 550 H362" stroke-width="6.5"/>
</g></svg>
<!-- taskbar -->
<div id="task" class="a"></div>
<div class="a" style="left:2px;top:728px;width:51px;height:38px;background:#D4D0C8;border:1px solid;border-color:#fff #404040 #404040 #fff;box-shadow:inset -1px -1px #808080"></div>
<div class="a" style="left:21px;top:731px;width:30px;height:32px;border:1px dotted #000"></div>
<svg style="left:4px;top:738px" width="16" height="15" viewBox="0 0 16 15">
 <path d="M1 3 C3 1.5 5 1.5 7.2 2.8 L6.2 7 C4 5.8 2.3 5.8 0 7Z" fill="#F25022"/>
 <path d="M7.6 3 C10 4.5 12 4.3 14.5 3 L13.5 7.2 C11 8.5 9 8.5 6.8 7.2Z" fill="#7FBA00"/>
 <path d="M0 7.6 C2.3 6.3 4 6.3 6.1 7.6 L5.1 12 C3 10.6 1.2 10.8 -1 12Z" fill="#00A4EF"/>
 <path d="M6.6 7.8 C9 9 11 9 13.4 7.8 L12.4 12 C10 13.3 8 13.3 5.6 12Z" fill="#FFB900"/>
</svg>
<div class="t" style="left:22px;top:741px;font-size:11.5px;font-weight:bold;color:#000;letter-spacing:0">Пуск</div>
<!-- server toolbox -->
<svg style="left:73px;top:731px" width="29" height="31" viewBox="0 0 29 31">
 <rect x="0.5" y="0.5" width="12" height="24" fill="#B8BCC0" stroke="#6A7076"/>
 <path d="M2 3h9M2 6h9M2 9h9M2 12h9" stroke="#70767C"/>
 <rect x="12" y="2" width="6" height="22" fill="#8C9298"/>
 <rect x="6" y="14" width="21" height="15" rx="2" fill="#9AA2A8" stroke="#5A6268"/>
 <path d="M13 14 V11 H20 V14" stroke="#4A5056" stroke-width="1.5" fill="none"/>
 <circle cx="11" cy="22" r="1.3" fill="#E8E8E8"/><circle cx="21" cy="22" r="1.3" fill="#E8E8E8"/>
</svg>
<!-- powershell -->
<svg style="left:122px;top:736px" width="29" height="22" viewBox="0 0 29 22"><path d="M5 0.5 H28 L23.5 21.5 H0.5Z" fill="#2E76C8" stroke="#1A5A9E"/><path d="M7 5 L14 10.5 L6 16" stroke="#fff" stroke-width="2.2" fill="none"/><path d="M13 16.5 H19" stroke="#fff" stroke-width="1.6"/></svg>
<!-- folder -->
<svg style="left:170px;top:734px" width="32" height="29" viewBox="0 0 32 29"><path d="M1 3 H11 L13 5 H31 V26 H1Z" fill="#F3D27C" stroke="#C9A445"/><rect x="4" y="1" width="24" height="6" fill="#fff" stroke="#ccc" stroke-width=".5"/><rect x="5" y="1.5" width="3" height="2" fill="#2DB040"/><rect x="13" y="3.5" width="3" height="2" fill="#D03020"/><rect x="21" y="5" width="3" height="2" fill="#2E88D8"/><path d="M1 8 H31 V26 H1Z" fill="#F8E29C" stroke="#C9A445"/><path d="M4 28 V18 H27 V28 H22 V23 H9 V28Z" fill="#7EC4F0" stroke="#3A90D0"/></svg>
<!-- excel -->
<svg style="left:221px;top:732px" width="30" height="30" viewBox="0 0 30 30"><rect x="15" y="4" width="14.5" height="22" fill="#fff" stroke="#1E7145"/><path d="M17 8h11M17 11h11M17 14h11M17 17h11M17 20h11M17 23h11" stroke="#1E7145" stroke-width="1.6"/><path d="M0 4 L18 0 V30 L0 26Z" fill="#1E7145"/><path d="M4.5 10 L11 20 M11 10 L4.5 20" stroke="#fff" stroke-width="2.6"/></svg>
<!-- floppy -->
<svg style="left:270px;top:731px" width="32" height="32" viewBox="0 0 32 32"><path d="M0.5 0.5 H28 L31.5 4 V31.5 H0.5Z" fill="#1F4CC8" stroke="#0E2A80"/><rect x="9" y="1" width="15" height="9" fill="#E8E8E8"/><rect x="18" y="2" width="4" height="6" fill="#1F4CC8"/><rect x="4" y="14" width="24" height="17" fill="#fff"/><path d="M6 17h20M6 21h20M6 25h10" stroke="#D82020" stroke-width="1.2"/><rect x="4" y="29" width="24" height="2.5" fill="#C82A3A"/><path d="M19 23 V27 M22 23 V27" stroke="#333" stroke-width="0.8"/></svg>
<!-- 1C active -->
<div class="a" style="left:311px;top:728px;width:49px;height:38px;background:#fff;border:1px solid;border-color:#404040 #fff #fff #404040;box-shadow:inset 1px 1px #808080"></div>
<svg style="left:321px;top:732px" width="30" height="30" viewBox="0 0 30 30">
 <defs><radialGradient id="g1d" cx="45%" cy="35%" r="65%"><stop offset="0" stop-color="#FFF8C8"/><stop offset=".6" stop-color="#F8D530"/><stop offset="1" stop-color="#D8A400"/></radialGradient></defs>
 <circle cx="15" cy="15" r="14.5" fill="url(#g1d)"/>
 <path d="M4.3 12.3 L7.8 9.6 H9.4 V20.5 M6.6 11 V20.5" stroke="#E01010" stroke-width="1.5" fill="none"/><path d="M21.5 14.8 A5.7 5.7 0 1 0 15.8 20.5 H28.6" stroke="#E01010" stroke-width="1.8" fill="none"/><path d="M18.6 14.8 A2.8 2.8 0 1 0 15.8 17.6 H28.6" stroke="#E01010" stroke-width="1.8" fill="none"/>
</svg>
<!-- tray -->
<div class="t" style="left:1052px;top:739px;font-size:12px;color:#000">EN</div>
<div class="a" style="left:1072px;top:730px;width:2px;height:34px;border-left:1px solid #808080;border-right:1px solid #fff"></div>
<div class="a" style="left:1076px;top:728px;width:287px;height:38px;border:1px solid;border-color:#808080 #fff #fff #808080"></div>
<svg style="left:1083px;top:739px" width="16" height="16" viewBox="0 0 16 16"><rect width="16" height="16" fill="#F39A1E"/><path d="M2 15 C4 8 8 3 15 1.5" stroke="#FFE0B0" stroke-width="1.2" fill="none"/></svg>
<svg style="left:1105px;top:738px" width="17" height="17" viewBox="0 0 17 17"><path d="M1 1 L8 9" stroke="#303090" stroke-width="1.5"/><path d="M1 1 L4 6" stroke="#E8D020" stroke-width="1.5"/><circle cx="11" cy="11" r="5" fill="#fff" stroke="#333"/><circle cx="11" cy="11" r="1.8" fill="#E01010"/></svg>
<svg style="left:1130px;top:737px" width="17" height="17" viewBox="0 0 17 17"><path d="M3 15 L1 8 C3 3 9 1 14 4 L16 11 C14 14 8 16 3 15Z" fill="#111"/><circle cx="8" cy="10" r="2.5" fill="#fff"/><path d="M5 5h6M4 8h9" stroke="#888" stroke-width=".7"/></svg>
<svg style="left:1155px;top:737px" width="17" height="17" viewBox="0 0 17 17"><circle cx="8.5" cy="8.5" r="8" fill="#DDE8EC" stroke="#9AB0B8"/><circle cx="8.5" cy="8.5" r="5.5" fill="#1E9EC8"/><ellipse cx="8.5" cy="6.5" rx="3.5" ry="2" fill="#8ED8F0"/></svg>
<svg style="left:1180px;top:737px" width="17" height="17" viewBox="0 0 17 17"><rect x="0.5" y="0.5" width="11" height="14" fill="#fff" stroke="#607080"/><path d="M2 3h7M2 5.5h5M2 8h4M2 10.5h4" stroke="#3050C0"/><circle cx="11.5" cy="11.5" r="5" fill="#fff" stroke="#404040"/><path d="M11.5 8 V11.5 L13.5 13" stroke="#000"/></svg>
<svg style="left:1203px;top:737px" width="17" height="17" viewBox="0 0 17 17"><path d="M1.5 1 V16" stroke="#707070" stroke-width="1.5"/><path d="M2 2 C6 0 9 4 15 3 L13 8 L15 10 C9 11 6 7 2 9Z" fill="#F4F4F4" stroke="#909090"/></svg>
<svg style="left:1227px;top:737px" width="17" height="17" viewBox="0 0 17 17"><rect x="5" y="3" width="11" height="9" fill="#E0E0E0" stroke="#707070"/><rect x="7" y="12" width="7" height="3" fill="#B0B0B0"/><path d="M2 1 V16 M4 1 V7 M0 7 H6" stroke="#606060" stroke-width="1.2" fill="none"/></svg>
<svg style="left:1251px;top:737px" width="17" height="17" viewBox="0 0 17 17"><path d="M1 6 H4 L8 2 V14 L4 10 H1Z" fill="#E8E8E8" stroke="#707070"/><circle cx="11.5" cy="11.5" r="4.5" fill="#E83030"/><path d="M9.5 9.5 L13.5 13.5 M13.5 9.5 L9.5 13.5" stroke="#fff" stroke-width="1.3"/></svg>
<div class="t" style="left:1297px;top:733px;font-size:11.5px;color:#000">9:51</div>
<div class="t" style="left:1281px;top:749px;font-size:11.5px;color:#000">18.02.2020</div>
<svg style="left:1345px;top:742px" width="15" height="12" viewBox="0 0 15 12"><rect x="0" y="0" width="15" height="12" fill="#2A6AC8"/><rect x="1" y="1" width="13" height="8" fill="#4A90E0"/><rect x="0" y="9" width="15" height="3" fill="#1A3A80"/><rect x="1" y="9.5" width="3" height="2" fill="#40B040"/></svg>
</body></html>
